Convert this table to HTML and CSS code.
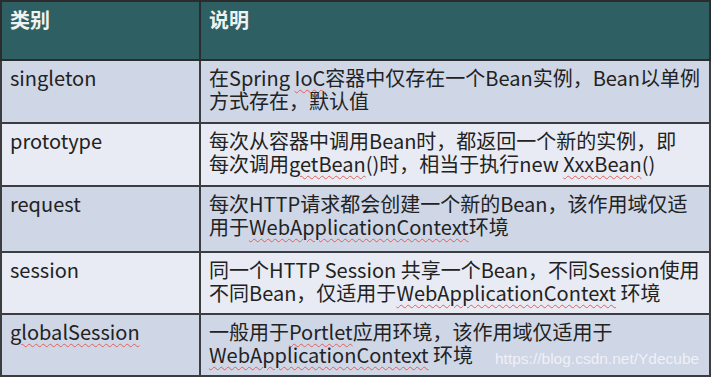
FILE: index.html
```html
<!DOCTYPE html>
<html lang="zh-CN">
<head>
<meta charset="utf-8">
<title>Bean 作用域</title>
<link rel="stylesheet" href="styles.css">
</head>
<body>
<div class="wrap">
<table class="scopes">
  <thead>
    <tr class="head">
      <th class="c1">类别</th>
      <th class="c2">说明</th>
    </tr>
  </thead>
  <tbody>
    <tr class="r1 odd">
      <td class="c1">singleton</td>
      <td class="c2"><div class="ln">在Spring <span class="sq">IoC</span>容器中仅存在一个Bean实例，Bean以单例</div><div class="ln">方式存在，默认值</div></td>
    </tr>
    <tr class="r2 even">
      <td class="c1">prototype</td>
      <td class="c2"><div class="ln">每次从容器中调用Bean时，都返回一个新的实例，即</div><div class="ln">每次调用<span class="sq">getBean</span>()时，相当于执行new <span class="sq">XxxBean</span>()</div></td>
    </tr>
    <tr class="r3 odd">
      <td class="c1">request</td>
      <td class="c2"><div class="ln">每次HTTP请求都会创建一个新的Bean，该作用域仅适</div><div class="ln">用于<span class="sq">WebApplicationContext</span>环境</div></td>
    </tr>
    <tr class="r4 even">
      <td class="c1">session</td>
      <td class="c2"><div class="ln">同一个HTTP Session 共享一个Bean，不同Session使用</div><div class="ln">不同Bean，仅适用于<span class="sq">WebApplicationContext</span> 环境</div></td>
    </tr>
    <tr class="r5 odd">
      <td class="c1"><span class="sq">globalSession</span></td>
      <td class="c2"><div class="ln">一般用于<span class="sq">Portlet</span>应用环境，该作用域仅适用于</div><div class="ln"><span class="sq">WebApplicationContext</span> 环境</div></td>
    </tr>
  </tbody>
</table>
<div class="watermark">https://blog.csdn.net/Ydecube</div>
</div>
</body>
</html>
```

FILE: styles.css
```css
html, body {
  margin: 0;
  padding: 0;
  background: #ffffff;
}

.wrap {
  position: relative;
  width: 713px;
  height: 378px;
  overflow: hidden;
}

.scopes {
  border-collapse: collapse;
  width: 711px;
  font-family: "Noto Sans CJK SC", "Noto Sans", sans-serif;
  font-size: 20px;
  line-height: 23px;
  color: #222222;
  table-layout: fixed;
}

.scopes th,
.scopes td {
  border: 2px solid #3b3d40;
  vertical-align: top;
  text-align: left;
  white-space: nowrap;
  padding: 5px 0 0 8px;
  overflow: hidden;
}

.scopes .c1 {
  width: 189px;
}

.ln {
  height: 23px;
}

.head {
  height: 59px;
  background: #2e5f63;
}

.head th {
  color: #eef3f2;
  font-weight: 700;
  padding-top: 6px;
  border-color: #2a2c2e;
}

.odd {
  background: #cfd6e6;
}

.even {
  background: #e8ebf3;
}

.r1 { height: 63px; }
.r2 { height: 63px; }
.r3 { height: 66px; }
.r4 { height: 62px; }
.r5 { height: 62px; }

.sq {
  text-decoration: underline wavy #e0605a;
  text-decoration-thickness: 1px;
  text-underline-offset: 3px;
}

.watermark {
  position: absolute;
  left: 495px;
  top: 350px;
  font-family: "Liberation Sans", Arial, sans-serif;
  font-size: 15.5px;
  line-height: 18px;
  color: rgba(245, 247, 250, 0.85);
}
```
